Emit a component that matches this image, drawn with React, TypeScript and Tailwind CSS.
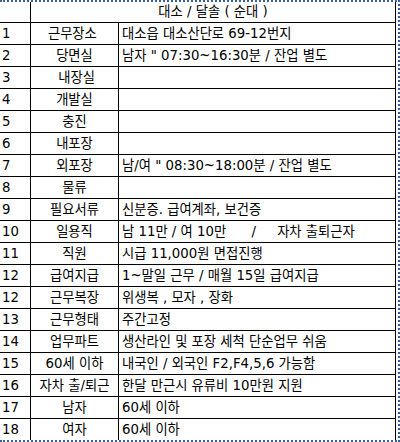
import React from "react";

type Row = { n: string; label: string; value: string };

const rows: Row[] = [
  { n: "1", label: "근무장소 ", value: "대소읍 대소산단로 69-12번지" },
  { n: "2", label: "당면실", value: "남자 \" 07:30~16:30분 / 잔업 별도" },
  { n: "3", label: " 내장실", value: "" },
  { n: "4", label: "개발실", value: "" },
  { n: "5", label: "충진", value: "" },
  { n: "6", label: "내포장", value: "" },
  { n: "7", label: "외포장", value: "남/여 \" 08:30~18:00분 / 잔업 별도" },
  { n: "8", label: "물류", value: "" },
  { n: "9", label: "필요서류", value: "신분증. 급여계좌, 보건증" },
  { n: "10", label: "일용직", value: "남 11만 / 여 10만      /     자차 출퇴근자" },
  { n: "11", label: "직원", value: "시급 11,000원 면접진행" },
  { n: "12", label: "급여지급", value: "1~말일 근무 / 매월 15일 급여지급" },
  { n: "12", label: "근무복장", value: "위생복 , 모자 , 장화" },
  { n: "13", label: "근무형태", value: "주간고정" },
  { n: "14", label: "업무파트", value: "생산라인 및 포장 세척 단순업무 쉬움" },
  { n: "15", label: "60세 이하", value: "내국인 / 외국인 F2,F4,5,6 가능함" },
  { n: "16", label: "자차 출/퇴근", value: "한달 만근시 유류비 10만원 지원" },
  { n: "17", label: "남자", value: "60세 이하" },
  { n: "18", label: "여자", value: "60세 이하" },
];

export default function App() {
  return (
    <div
      className="w-[400px] h-[442px] bg-white border-t-2 border-r-2 border-b-2 border-dotted border-[#3a5f9f] text-black text-[13.3px] leading-none whitespace-pre"
      style={{ fontFamily: '"DejaVu Sans", "Noto Sans CJK KR", sans-serif' }}
    >
      <div className="w-[396px] flex flex-col">
        <div className="grid grid-cols-[31px_365px] h-[21px] border-b border-black">
          <div className="border-r border-black" />
          <div className="border-r border-black flex items-center justify-center">
            대소 / 달솔 ( 순대 )
          </div>
        </div>
        {rows.map((r, i) => (
          <div
            key={i}
            className={
              i === rows.length - 1
                ? "grid grid-cols-[31px_88px_277px] h-[21px]"
                : "grid grid-cols-[31px_88px_277px] h-[22px] border-b border-black"
            }
          >
            <div className="border-r border-black flex items-center pl-[2px]">{r.n}</div>
            <div className="border-r border-black flex items-center justify-center">{r.label}</div>
            <div className="border-r border-black flex items-center pl-[3px]">{r.value}</div>
          </div>
        ))}
      </div>
    </div>
  );
}
